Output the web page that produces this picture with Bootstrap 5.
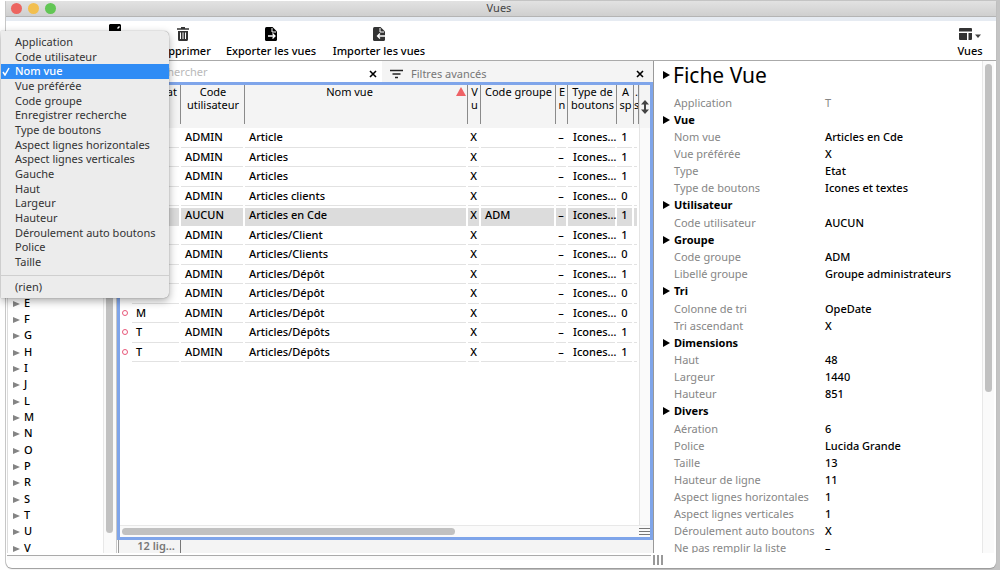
<!DOCTYPE html>
<html lang="fr">
<head>
<meta charset="utf-8">
<meta name="viewport" content="width=device-width, initial-scale=1">
<title>Vues</title>
<link href="https://cdn.jsdelivr.net/npm/bootstrap@5.3.0/dist/css/bootstrap.min.css" rel="stylesheet">
<style>
body{font-family:"Noto Sans","Open Sans",sans-serif;font-size:11px;line-height:17px;color:#000;background:linear-gradient(90deg,#fff 50%,#c4c4c4 50%)}
button{font:inherit;color:inherit}
.desk{height:100vh;padding:1px 4px 2px 6px}
.win{background:#fff;border-radius:0 0 6px 6px;box-shadow:0 1px 1px #999,-1px 0 0 #ccc}
.titlebar{height:16px;background:linear-gradient(#e2e2e2,#cfcfcf);border-bottom:1px solid #b4b4b4;font-size:11px;line-height:14px;color:#444;padding-right:4px}
.lights{left:5px;top:2px;gap:6px}
.lights button{width:11px;height:11px;border-radius:50%;border:0;padding:0}
.toolbar{height:44px;border-top:4px solid #e6ebf2;border-bottom:1px solid #aaa;padding-left:75px}
.tool{width:108px;padding:3px 0 0;border:0;background:none;line-height:14px;font-weight:500}
.tool.narrow{width:68px}
.tool svg{display:block;margin:0 auto 3px}
.tool.views{width:52px}
.side{width:111px;padding:234px 0 0 1px;border-right:1px solid #c8c8c8}
.tree{border-left:1px solid #ddd}
.tree li{height:16px;line-height:15px;padding-left:5px;font-weight:500}
.tree li:nth-child(3n){height:17px}
.tri{display:inline-block;width:0;height:0;border:3px solid transparent;border-left:7px solid #848484;border-right:0;margin-right:4px}
.vtrack{background:#fafafa;border-left:1px solid #e8e8e8}
.thumb{background:#c1c1c1;border-radius:4px}
.side .vtrack{width:13px;padding:0 3px 20px 2px}
.search{height:21px;background:#f4f4f4}
.search input{border:0;background:#fff;font-size:11px;height:19px;padding:0 0 0 32px;outline:0;min-width:0}
.search input::placeholder{color:#b9b9b9;opacity:1}
.seek{width:265px;background:#fff;padding-right:4px}
.x-btn{border:0;background:none;padding:4px 0 0;width:10px;line-height:0}
.gridbox{border:3px solid #7fa5ea}
.gridbox table{table-layout:fixed;border-collapse:separate;border-spacing:0;width:100%;line-height:13px}
.gridbox th{height:43px;background:#f4f4f4;font-weight:400;text-align:center;vertical-align:top;padding:0 0 4px;position:relative;overflow:hidden}
.gridbox th+th::after{content:"";position:absolute;right:0;top:0;bottom:4px;width:1px;background:#8a8a8a}
.gridbox td{height:19px;padding:0 0 3px 4px;white-space:nowrap;overflow:hidden;font-weight:500;background:linear-gradient(#e2e2e2,#e2e2e2) left bottom/calc(100% - 2px) 1px no-repeat}
.gridbox tr:nth-child(odd) td{height:20px}
.gridbox tr td:first-child{background:none;padding:0 0 2px 1px}
.gridbox tr.sel td+td{background:linear-gradient(#dcdcdc,#dcdcdc) left bottom/calc(100% - 2px) 18px no-repeat}
.gridbox td.mid{text-align:center;padding:0 2px 3px 0}
.gridbox td.icons{padding-left:5px}
.ring{display:block;width:6px;height:6px;border:1px solid #e8587a;border-radius:50%;margin-left:1px}
.sorted{position:absolute;right:2px;top:2px;border:5px solid transparent;border-bottom:9px solid #ee6266;border-top:0}
.namecol{padding-right:14px!important}
.vcol{width:11px;background:#fafafa;border-left:1px solid #e4e4e4}
.vcol .cap{height:43px;background:#f4f4f4}
.htrack{height:12px;background:#fafafa;border-top:1px solid #e8e8e8;padding:2px 0 2px 2px}
.htrack .thumb{width:63%}
.status{height:13px;background:#f4f4f4;border-left:1px solid #999;margin-left:1px}
.status span{width:62px;padding-right:5px;border-right:1px solid #777;color:#777;font-weight:600;line-height:12px;text-align:right}
.detail{width:343px;border-left:1px solid #999}
.fiche{padding:2px 0 0 9px}
.fiche h1{font-size:21px;line-height:24px;margin:0 0 7px;font-weight:400}
.fiche h2{font-size:11px;line-height:17px;font-weight:700;margin:0}
.fiche h2:nth-of-type(even){line-height:18px}
.tw{display:inline-block;width:0;height:0;border:4px solid transparent;border-left:7px solid #000;border-right:0;margin-right:4px}
.fiche h1 .tw{vertical-align:4px;margin-right:3px}
.fiche dl{padding-left:11px;margin:0}
.fiche dt{width:151px;font-weight:400;color:#868686}
.fiche dd{margin:0;font-weight:500}
.fiche .dim dd{color:#868686;font-weight:400}
.detail .vtrack{width:12px;margin-right:2px;padding-top:3px}
.detail .thumb{width:7px;height:67%;margin:0 auto}
.foot{height:15px}
.foot .rule{border-top:1px solid #aaa;background:#fafafa;height:5px;margin:2px 0 0 1px}
.foot .grip{width:345px;padding:2px 0 0 2px;gap:2px}
.foot .grip i{width:2px;height:10px;background:#999}
.menu{left:1px;top:31px;width:168px;min-width:0;padding:4px 0 3px;background:#ececec;border:0;border-radius:0 5px 5px 0;box-shadow:0 3px 9px #0005,0 0 1px #0008;font-size:11px;color:#333}
.menu .dropdown-item{height:15px;line-height:13px;padding:0 0 2px 14px;color:#333;position:relative}
.menu .dropdown-item:nth-child(3n+2){height:14px}
.menu .dropdown-item.active{background:#2f8cf5;color:#fff;font-weight:500}
.menu .active svg{position:absolute;left:1px;top:3px}
.menu .dropdown-divider{margin:5px 0 4px;border-color:#cfcfcf;opacity:1}
</style>
</head>
<body class="overflow-hidden">
<div class="desk">
<div class="win h-100 d-flex flex-column overflow-hidden">
  <header class="titlebar position-relative text-center flex-shrink-0">
    <div class="lights position-absolute d-flex">
      <button aria-label="Fermer" style="background:#ec6560"></button><button aria-label="Réduire" style="background:#f2bf50"></button><button aria-label="Agrandir" style="background:#62c655"></button>
    </div>
    Vues
  </header>
  <nav class="toolbar d-flex flex-shrink-0">
    <button class="tool narrow d-flex" aria-label="Modifier"><svg width="12" height="14" viewBox="0 0 12 14"><path d="M1 0h10l1 1v12H0V1z"/><path d="M8 4l2-2 1 1-2 2z" fill="#fff"/></svg></button>
    <button class="tool narrow"><svg width="12" height="14" viewBox="0 0 12 14"><path d="M4 0h4v1.300h4v1.500H0V1.300h4zM1 4h10v8.500q0 1.500-1.500 1.500h-7Q1 14 1 12.500z" fill="#333"/><path d="M3.500 5.500v6.500M6 5.500v6.500M8.500 5.500v6.500" stroke="#fff" stroke-width="1"/></svg>Supprimer</button>
    <button class="tool"><svg width="12" height="14" viewBox="0 0 12 14"><path d="M1.500 0H7.500L12 4.500V12.500Q12 14 10.500 14H1.500Q0 14 0 12.500V1.500Q0 0 1.500 0z"/><path d="M7 1v4h4" fill="none" stroke="#fff"/><path d="M3 9h7M7.500 6.500L10 9 7.500 11.500" fill="none" stroke="#fff" stroke-width="1.300"/></svg>Exporter les vues</button>
    <button class="tool"><svg width="12" height="14" viewBox="0 0 12 14"><path d="M1.500 0H7.500L12 4.500V12.500Q12 14 10.500 14H1.500Q0 14 0 12.500V1.500Q0 0 1.500 0z" fill="#333"/><path d="M7 1v4h4" fill="none" stroke="#fff"/><path d="M12 9H4.500M7 6.500L4.500 9 7 11.500" fill="none" stroke="#fff" stroke-width="1.300"/></svg>Importer les vues</button>
    <button class="tool views ms-auto"><svg width="22" height="14" viewBox="0 0 22 14"><path d="M1 1h11q1 0 1 1V4.500H0V2q0-1 1-1zM0 6h8V13H1q-1 0-1-1zM9.500 6H13V12q0 1-1 1H9.500z" fill="#333"/><path d="M16 7.500h6l-3 3.500z" fill="#444"/></svg>Vues</button>
  </nav>
  <main class="d-flex flex-grow-1 overflow-hidden" style="min-height:0">
    <aside class="side d-flex flex-shrink-0">
      <ul class="tree list-unstyled mb-0 flex-grow-1">
        <li><i class="tri"></i>E</li><li><i class="tri"></i>F</li><li><i class="tri"></i>G</li><li><i class="tri"></i>H</li><li><i class="tri"></i>I</li><li><i class="tri"></i>J</li><li><i class="tri"></i>L</li><li><i class="tri"></i>M</li><li><i class="tri"></i>N</li><li><i class="tri"></i>O</li><li><i class="tri"></i>P</li><li><i class="tri"></i>R</li><li><i class="tri"></i>S</li><li><i class="tri"></i>T</li><li><i class="tri"></i>U</li><li><i class="tri"></i>V</li>
      </ul>
      <div class="vtrack d-flex"><div class="thumb flex-grow-1"></div></div>
    </aside>
    <section class="d-flex flex-column flex-grow-1" style="min-width:0">
      <div class="search d-flex flex-shrink-0">
        <div class="seek d-flex align-items-center">
          <input class="flex-grow-1" type="text" placeholder="Rechercher" aria-label="Rechercher">
          <button class="x-btn" aria-label="Effacer"><svg width="8" height="8" viewBox="0 0 8 8"><path d="M1 1l6 6M7 1L1 7" stroke="#000" stroke-width="1.600"/></svg></button>
        </div>
        <div class="d-flex align-items-center flex-grow-1 ps-2 pe-2">
          <svg class="mt-1" width="13" height="10" viewBox="0 0 13 10"><path d="M0 1.500h13M2.500 5h8M5 8.500h3" stroke="#222" stroke-width="1.500"/></svg>
          <span class="ms-2 mt-1 flex-grow-1" style="color:#777">Filtres avancés</span>
          <button class="x-btn" aria-label="Retirer les filtres"><svg width="8" height="8" viewBox="0 0 8 8"><path d="M1 1l6 6M7 1L1 7" stroke="#000" stroke-width="1.600"/></svg></button>
        </div>
      </div>
      <div class="gridbox d-flex flex-column flex-grow-1 overflow-hidden">
        <div class="d-flex flex-grow-1" style="min-height:0">
          <div class="flex-grow-1 overflow-hidden">
            <table>
              <colgroup><col style="width:12px"><col style="width:49px"><col style="width:64px"><col><col style="width:13px"><col style="width:75px"><col style="width:12px"><col style="width:49px"><col style="width:17px"><col style="width:5px"></colgroup>
              <thead><tr><th></th><th class="text-end pe-1">Etat</th><th>Code<br>utilisateur</th><th class="namecol">Nom vue<i class="sorted"></i></th><th>V<br>u</th><th>Code groupe</th><th>E<br>n</th><th>Type de<br>boutons</th><th>A<br>sp</th><th>.<br>s</th></tr></thead>
              <tbody id="rows"></tbody>
            </table>
          </div>
          <div class="vcol flex-shrink-0"><div class="cap d-flex align-items-center justify-content-center"><svg width="8" height="14" viewBox="0 0 8 14"><path d="M4 0l4 4.500H5v5h3L4 14 0 9.500h3v-5H0z" fill="#444"/></svg></div></div>
        </div>
        <div class="htrack d-flex justify-content-between flex-shrink-0"><div class="thumb"></div><svg width="12" height="8" viewBox="0 0 12 8"><path d="M1 .5h11M1 3.500h11M1 6.500h11" stroke="#777"/></svg></div>
      </div>
      <div class="status d-flex flex-shrink-0"><span>12 lig…</span></div>
    </section>
    <section class="detail d-flex flex-shrink-0">
      <div class="fiche flex-grow-1 overflow-hidden">
        <h1><i class="tw"></i>Fiche Vue</h1>
        <dl class="dim"><div class="d-flex"><dt>Application</dt><dd>T</dd></div></dl>
        <div id="groups"></div>
      </div>
      <div class="vtrack flex-shrink-0"><div class="thumb"></div></div>
    </section>
  </main>
  <footer class="foot d-flex flex-shrink-0"><div class="rule flex-grow-1"></div><div class="grip d-flex"><i></i><i></i><i></i></div></footer>
</div>
</div>
<div class="menu dropdown-menu show position-absolute" id="cols"></div>
<script>
const rows = [
  ['','ADMIN','Article','',1],['','ADMIN','Articles','',1],['','ADMIN','Articles','',1],['','ADMIN','Articles clients','',0],
  ['','AUCUN','Articles en Cde','ADM',1],['','ADMIN','Articles/Client','',1],['','ADMIN','Articles/Clients','',0],['','ADMIN','Articles/Dépôt','',1],
  ['','ADMIN','Articles/Dépôt','',0],['M','ADMIN','Articles/Dépôt','',0],['T','ADMIN','Articles/Dépôts','',1],['T','ADMIN','Articles/Dépôts','',1]];
document.getElementById('rows').innerHTML = rows.map(([e,u,n,g,a]) =>
  `<tr${g ? ' class="sel"' : ''}><td>${e ? '<i class="ring"></i>' : ''}</td><td>${e}</td><td>${u}</td><td>${n}</td><td class="mid">X</td><td>${g}</td><td class="mid">–</td><td class="icons">Icones…</td><td class="mid">${a}</td><td></td></tr>`).join('');
const groups = {
  'Vue':[['Nom vue','Articles en Cde'],['Vue préférée','X'],['Type','Etat'],['Type de boutons','Icones et textes']],
  'Utilisateur':[['Code utilisateur','AUCUN']],
  'Groupe':[['Code groupe','ADM'],['Libellé groupe','Groupe administrateurs']],
  'Tri':[['Colonne de tri','OpeDate'],['Tri ascendant','X']],
  'Dimensions':[['Haut','48'],['Largeur','1440'],['Hauteur','851']],
  'Divers':[['Aération','6'],['Police','Lucida Grande'],['Taille','13'],['Hauteur de ligne','11'],['Aspect lignes horizontales','1'],['Aspect lignes verticales','1'],['Déroulement auto boutons','X'],['Ne pas remplir la liste','–']]};
document.getElementById('groups').innerHTML = Object.entries(groups).map(([t,l]) =>
  `<h2><i class="tw"></i>${t}</h2><dl>${l.map(([k,v]) => `<div class="d-flex text-nowrap"><dt>${k}</dt><dd>${v}</dd></div>`).join('')}</dl>`).join('');
const cols = ['Application','Code utilisateur','Nom vue','Vue préférée','Code groupe','Enregistrer recherche','Type de boutons','Aspect lignes horizontales','Aspect lignes verticales','Gauche','Haut','Largeur','Hauteur','Déroulement auto boutons','Police','Taille'];
const check = '<svg width="8" height="9" viewBox="0 0 8 9"><path d="M1 5l2 3 4-7" fill="none" stroke="#fff" stroke-width="1.500"/></svg>';
document.getElementById('cols').innerHTML = cols.map(c =>
  `<button class="dropdown-item${c === 'Nom vue' ? ' active' : ''}">${c === 'Nom vue' ? check : ''}${c}</button>`).join('') +
  '<hr class="dropdown-divider"><button class="dropdown-item">(rien)</button>';
</script>
<script src="https://cdn.jsdelivr.net/npm/bootstrap@5.3.0/dist/js/bootstrap.bundle.min.js"></script>
</body>
</html>
